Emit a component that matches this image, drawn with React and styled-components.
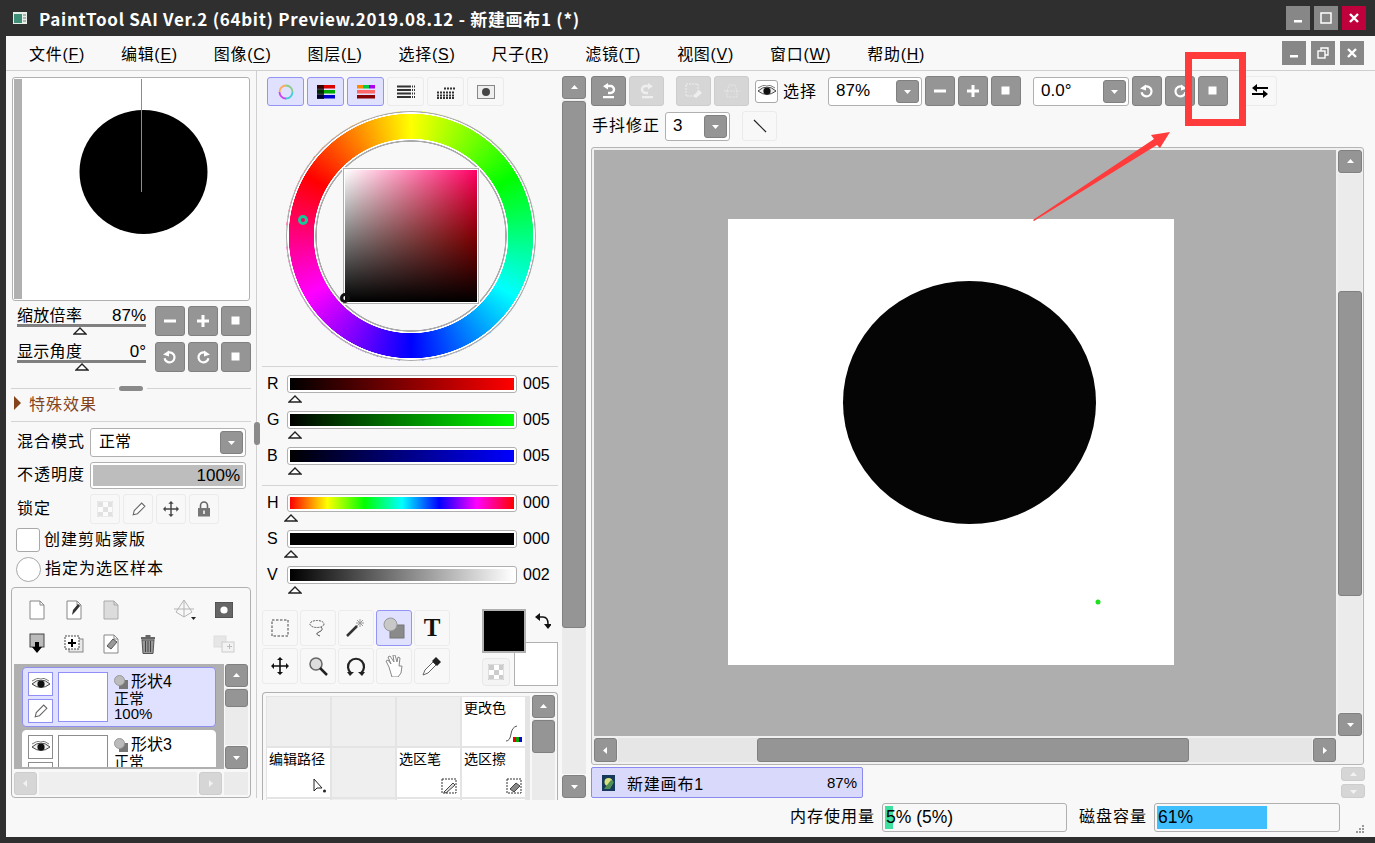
import styled, { createGlobalStyle, css } from 'styled-components';

const GlobalStyle = createGlobalStyle`
  html, body {
    margin: 0;
    padding: 0;
    background: #2f2f2f;
  }
  * {
    box-sizing: border-box;
  }
`;

const Window = styled.div`
  position: relative;
  width: 1375px;
  height: 843px;
  overflow: hidden;
  background: #2f2f2f;
  color: #000;
  font-family: 'Liberation Sans', 'Noto Sans CJK SC', sans-serif;
  font-size: 16px;
`;

const TitleBar = styled.div`
  height: 36px;
  display: flex;
  align-items: center;
  padding: 0 9px 0 13px;
`;

const AppTitle = styled.div`
  margin-left: 12px;
  flex: 1;
  color: #fff;
  font-family: 'Noto Sans CJK SC', 'Liberation Sans', sans-serif;
  font-size: 17px;
  font-weight: 700;
  letter-spacing: 0.7px;
  white-space: nowrap;
`;

const WinButtons = styled.div`
  display: flex;
  gap: ${(p) => p.$gap || 4}px;
`;

const WinButton = styled.div`
  width: 24px;
  height: 24px;
  display: flex;
  align-items: center;
  justify-content: center;
  background: ${(p) => p.$bg || '#878787'};
`;

const Body = styled.div`
  margin-left: 6px;
  height: 801px;
  background: #f8f8f8;
`;

const MenuBar = styled.div`
  height: 35px;
  display: flex;
  align-items: center;
  padding: 0 11px 0 23px;
  border-bottom: 1px solid #cfcfcf;
`;

const MenuItems = styled.div`
  flex: 1;
  display: flex;
  gap: 36px;
`;

const MenuItem = styled.span`
  white-space: nowrap;
  letter-spacing: 0.7px;
  u {
    text-underline-offset: 2px;
  }
`;

const Main = styled.div`
  display: flex;
  height: 766px;
`;

/* left panel */
const LeftPanel = styled.div`
  width: 251px;
  height: 727px;
  padding: 6px 0 0 5px;
  border-right: 1px solid #cfcfcf;
  position: relative;
`;

const Navigator = styled.div`
  width: 238px;
  height: 224px;
  margin-left: 1px;
  display: flex;
  align-items: stretch;
  background: #fff;
  border: 1px solid #b0b0b0;
  border-radius: 3px;
  padding: 1px;
`;

const NavStrip = styled.div`
  width: 8px;
  background: #b0b0b0;
`;

const SliderRow = styled.div`
  display: flex;
  margin-top: ${(p) => p.$top}px;
  padding-left: 6px;
  height: 30px;
`;

const SliderBlock = styled.div`
  position: relative;
  width: 129px;
  margin-right: 9px;
`;

const SliderText = styled.div`
  display: flex;
  justify-content: space-between;
  line-height: 20px;
  height: 17px;
  letter-spacing: 0.3px;
`;

const SliderValue = styled.span`
  font-size: 17px;
  letter-spacing: 0;
`;

const SliderTrack = styled.div`
  height: 3px;
  margin-top: 1px;
  background: #808080;
`;

const Triangle = styled.div`
  position: absolute;
  left: ${(p) => p.$left}px;
  top: ${(p) => p.$top}px;
  width: 14px;
  height: 8px;
  line-height: 0;
`;

const BtnGroup = styled.div`
  display: flex;
  gap: ${(p) => (p.$gap === undefined ? 3 : p.$gap)}px;
`;

const kinds = {
  solid: css`
    background: #959595;
    border: 1px solid #808080;
    color: #fff;
  `,
  muted: css`
    background: #d6d6d6;
    border: 1px solid #cdcdcd;
    color: #eee;
  `,
  ghost: css`
    background: #f8f8f8;
    border: 1px solid #ebebeb;
    color: #222;
  `,
  active: css`
    background: #e0e0ff;
    border: 1px solid #9494f5;
    color: #222;
  `,
  white: css`
    background: #fff;
    border: 1px solid #a8a8a8;
    color: #222;
  `,
};

const Btn = styled.button`
  width: ${(p) => p.$w || 30}px;
  height: ${(p) => p.$h || 30}px;
  flex: none;
  padding: 0;
  display: flex;
  align-items: center;
  justify-content: center;
  border-radius: 3px;
  margin-left: ${(p) => p.$ml || 0}px;
  ${(p) => kinds[p.$kind || 'solid']}
`;

const SashRow = styled.div`
  height: 10px;
  margin: 11px 5px 0 0;
  display: flex;
  align-items: center;
  gap: 4px;
`;

const SashLine = styled.div`
  flex: 1;
  height: 1px;
  background: #d4d4d4;
`;

const SashGrip = styled.div`
  width: 24px;
  height: 5px;
  border-radius: 3px;
  background: #8a8a8a;
`;

const EffectHead = styled.div`
  height: 29px;
  margin-right: 5px;
  padding: 0 0 8px 3px;
  display: flex;
  align-items: center;
  gap: 8px;
  color: #84431b;
  letter-spacing: 1px;
  border-bottom: 1px solid #d4d4d4;
`;

const Arrow = styled.div`
  width: 0;
  height: 0;
  border-style: solid;
  border-width: 7px 0 7px 7px;
  border-color: transparent transparent transparent #84431b;
`;

const FormRow = styled.div`
  display: flex;
  align-items: center;
  margin-top: ${(p) => p.$top}px;
  height: ${(p) => p.$h}px;
  padding-left: ${(p) => (p.$pad === undefined ? 6 : p.$pad)}px;
`;

const FormLabel = styled.div`
  width: 73px;
  flex: none;
  margin-bottom: 5px;
  letter-spacing: 1px;
  white-space: nowrap;
`;

const Select = styled.div`
  width: ${(p) => p.$w}px;
  height: ${(p) => p.$h || 30}px;
  margin-left: ${(p) => p.$ml || 0}px;
  flex: none;
  display: flex;
  align-items: center;
  justify-content: space-between;
  padding: 0 2px 0 7px;
  background: #fff;
  border: 1px solid #b0b0b0;
  border-radius: 3px;
  font-size: ${(p) => (p.$text ? 16 : 17)}px;
`;

const SelectValue = styled.span`
  margin-bottom: ${(p) => (p.$text ? 5 : 0)}px;
  margin-left: ${(p) => (p.$text ? 1 : 0)}px;
`;

const SelectCaret = styled.div`
  width: 23px;
  height: 23px;
  display: flex;
  align-items: center;
  justify-content: center;
  background: #959595;
  border: 1px solid #808080;
  border-radius: 3px;
`;

const OpacityBar = styled.div`
  width: 156px;
  height: 27px;
  padding: 2px;
  background: #fff;
  border: 1px solid #b0b0b0;
  border-radius: 3px;
`;

const OpacityFill = styled.div`
  height: 100%;
  padding-right: 3px;
  text-align: right;
  line-height: 21px;
  font-size: 17px;
  background: #bdbdbd;
`;

const Check = styled.div`
  width: ${(p) => p.$size}px;
  height: ${(p) => p.$size}px;
  flex: none;
  margin-right: ${(p) => p.$mr}px;
  background: #fff;
  border: 1px solid #a8a8a8;
  border-radius: ${(p) => (p.$round ? '50%' : '3px')};
`;

const CheckText = styled.span`
  margin-bottom: 5px;
  letter-spacing: 1px;
`;

const LayerPanel = styled.div`
  width: 240px;
  height: 211px;
  margin-top: 5px;
  padding: 5px 2px 0;
  background: #f8f8f8;
  border: 1px solid #b0b0b0;
  border-radius: 4px;
`;

const LayerTools = styled.div`
  display: grid;
  grid-template-columns: repeat(5, 37px) 41px;
  grid-auto-rows: 34px;
  padding-left: 4px;
  margin-bottom: 3px;
  place-items: center;
`;

const LayerBody = styled.div`
  display: flex;
  height: 105px;
`;

const LayerList = styled.div`
  width: 210px;
  padding: 3px 8px 2px;
  background: #b0b0b0;
`;

const LayerClip = styled.div`
  height: 100px;
  overflow: hidden;
  display: flex;
  flex-direction: column;
  gap: 3px;
`;

const LayerItem = styled.div`
  flex: none;
  height: 60px;
  display: flex;
  padding: 4px 5px;
  background: ${(p) => (p.$on ? '#e0e0ff' : '#fff')};
  border: 1px solid ${(p) => (p.$on ? '#8f8ff0' : '#fff')};
  border-radius: 4px;
  --edge: ${(p) => (p.$on ? '#8f8ff5' : '#8c8c8c')};
`;

const LayerFlags = styled.div`
  width: 25px;
  display: flex;
  flex-direction: column;
  gap: 3px;
`;

const LayerFlag = styled.div`
  width: 25px;
  height: 24px;
  flex: none;
  display: flex;
  align-items: center;
  justify-content: center;
  background: #fff;
  border: 1px solid var(--edge);
`;

const LayerThumb = styled.div`
  width: 50px;
  height: 50px;
  margin-left: 5px;
  flex: none;
  background: #fff;
  border: 1px solid var(--edge);
`;

const LayerText = styled.div`
  margin-left: 6px;
  font-size: 15px;
  line-height: 15px;
`;

const LayerName = styled.div`
  display: flex;
  align-items: center;
  gap: 3px;
  height: 19px;
  font-size: 16px;
`;

const HBar = styled.div`
  display: flex;
  height: 23px;
  margin-top: 3px;
  gap: 2px;
`;

const HTrack = styled.div`
  flex: 1;
  padding-left: ${(p) => p.$start || 0}px;
  background: ${(p) => p.$bg || '#efefef'};
`;

const HThumb = styled.div`
  width: ${(p) => p.$w}px;
  height: 100%;
  background: #959595;
  border: 1px solid #808080;
  border-radius: 3px;
`;

const ScrollCorner = styled.div`
  width: 24px;
  background: #ebebeb;
`;

const VBar = styled.div`
  width: ${(p) => p.$w || 23}px;
  height: ${(p) => p.$h}px;
  margin-left: ${(p) => p.$ml || 0}px;
  margin-top: ${(p) => p.$mt || 0}px;
  flex: none;
  display: flex;
  flex-direction: column;
  gap: 1px;
`;

const VTrack = styled.div`
  flex: 1;
  min-height: 0;
  padding-top: ${(p) => p.$start || 0}px;
  background: #ebebeb;
`;

const VThumb = styled.div`
  height: ${(p) => p.$h}px;
  background: #959595;
  border: 1px solid #808080;
  border-radius: 3px;
`;

const Splitter = styled.div`
  position: absolute;
  right: -4px;
  top: 351px;
  width: 6px;
  height: 23px;
  background: #8a8a8a;
  border-radius: 3px;
`;

/* colour panel */
const ColorPanel = styled.div`
  width: 305px;
  flex: none;
  height: 727px;
  padding: 6px 0 0 5px;
`;

const ColorTabs = styled.div`
  display: flex;
  gap: 3px;
  padding-left: 5px;
`;

const WheelBox = styled.div`
  width: 250px;
  height: 250px;
  margin: 5px 0 0 24px;
  position: relative;
  border-radius: 50%;
  background:
    radial-gradient(circle, #f8f8f8 0 94px, #aaa 94.5px 95.5px, #fff 96px 97px, transparent 97.5px 122px, #fff 122.5px 123.5px, #aaa 124px 125px, transparent 125px),
    conic-gradient(#ffff00, #00ff00 60deg, #00ffff 120deg, #0000ff 180deg, #ff00ff 240deg, #ff0000 300deg, #ffff00);
`;

const SvSquare = styled.div`
  position: absolute;
  left: 57px;
  top: 57px;
  width: 136px;
  height: 136px;
  border: 1px solid #b0b0b0;
  outline: 1px solid #f8f8f8;
  padding: 1px;
  background: #fff;
`;

const SvFill = styled.div`
  width: 100%;
  height: 100%;
  background:
    linear-gradient(to top, #000, transparent),
    linear-gradient(to right, #fff, transparent),
    linear-gradient(to bottom, #ff0068, #ff0000 55%, #ff0000);
`;

const WheelMark = styled.div`
  position: absolute;
  left: ${(p) => p.$x}px;
  top: ${(p) => p.$y}px;
  width: ${(p) => p.$d}px;
  height: ${(p) => p.$d}px;
  border-radius: 50%;
  border: 3px solid ${(p) => p.$c};
`;

const Rule = styled.div`
  width: 296px;
  height: 1px;
  background: #d4d4d4;
  margin-top: ${(p) => p.$top}px;
`;

const ChannelGroup = styled.div`
  padding: 8px 0 0 5px;
  display: flex;
  flex-direction: column;
  gap: 18px;
`;

const Channel = styled.div`
  position: relative;
  display: flex;
  align-items: center;
  height: 18px;
`;

const ChannelName = styled.div`
  width: 20px;
`;

const ChannelBar = styled.div`
  width: 230px;
  height: 18px;
  padding: 2px;
  background: #fff;
  border: 1px solid #b0b0b0;
  border-radius: 3px;
`;

const ChannelFill = styled.div`
  height: 100%;
  background: ${(p) => p.$bg};
`;

const ChannelValue = styled.div`
  margin-left: 6px;
`;

const ToolRow = styled.div`
  display: flex;
  margin-top: 26px;
  height: 76px;
`;

const ToolGrid = styled.div`
  width: 188px;
  display: grid;
  grid-template-columns: repeat(5, 36px);
  grid-auto-rows: 36px;
  gap: 2px;
`;

const ToolText = styled.span`
  font-family: 'Liberation Serif', serif;
  font-size: 25px;
  font-weight: 700;
  color: #111;
`;

const Swatches = styled.div`
  position: relative;
  width: 76px;
  margin-left: 32px;
`;

const BackSwatch = styled.div`
  position: absolute;
  right: 0;
  bottom: 0;
  width: 44px;
  height: 44px;
  background: #fff;
  border: 1px solid #b0b0b0;
`;

const FrontSwatch = styled.div`
  position: absolute;
  left: 0;
  top: -1px;
  width: 44px;
  height: 44px;
  background: #000;
  border: 2px solid #b0b0b0;
`;

const SwapMark = styled.div`
  position: absolute;
  right: 7px;
  top: 3px;
  line-height: 0;
`;

const ClearSwatch = styled.div`
  position: absolute;
  left: 0;
  bottom: 0;
  width: 28px;
  height: 28px;
  display: flex;
  align-items: center;
  justify-content: center;
  background: #f4f4f4;
  border: 1px solid #e8e8e8;
  border-radius: 4px;
`;

const BrushBox = styled.div`
  width: 296px;
  height: 108px;
  margin-top: 6px;
  padding: 3px 2px 0 3px;
  display: flex;
  overflow: hidden;
  border: 1px solid #b0b0b0;
  border-bottom: none;
  border-radius: 4px 4px 0 0;
`;

const BrushGrid = styled.div`
  width: 264px;
  flex: none;
  padding: 1px 5px 0 1px;
  display: grid;
  grid-template-columns: repeat(4, 63px);
  grid-auto-rows: 49px;
  gap: 2px;
  background: #e4e4e4;
`;

const BrushCell = styled.div`
  display: flex;
  flex-direction: column;
  justify-content: space-between;
  padding: 0 3px 3px 2px;
  font-size: 14px;
  white-space: nowrap;
  background: ${(p) => (p.$on ? '#fff' : '#efefef')};
`;

const BrushIcon = styled.div`
  align-self: flex-end;
  line-height: 0;
`;

/* right side */
const RightColumn = styled.div`
  flex: 1;
  padding: 5px 0 0 5px;
`;

const ToolbarRow = styled.div`
  display: flex;
  align-items: center;
  height: 30px;
  margin-top: ${(p) => p.$top || 0}px;
`;

const BarLabel = styled.span`
  margin-left: ${(p) => p.$ml || 0}px;
  margin-bottom: ${(p) => p.$up || 0}px;
  letter-spacing: 1px;
  white-space: nowrap;
`;

const CanvasBox = styled.div`
  width: 773px;
  height: 618px;
  margin-top: 6px;
  padding: 2px;
  display: grid;
  grid-template-columns: 742px 24px;
  grid-template-rows: 586px 24px;
  column-gap: 2px;
  row-gap: 2px;
  border: 1px solid #b5b5b5;
  border-radius: 3px;
  background: #f0f0f0;
`;

const Stage = styled.div`
  background: #aeaeae;
  padding: 69px 0 0 134px;
`;

const Sheet = styled.svg`
  display: block;
  background: #fff;
`;

const CanvasHBar = styled.div`
  display: flex;
  gap: 1px;
`;

const DocRow = styled.div`
  display: flex;
  height: 31px;
  margin-top: 2px;
  padding-right: 10px;
  justify-content: space-between;
`;

const DocTab = styled.div`
  width: 272px;
  height: 31px;
  display: flex;
  align-items: center;
  padding: 0 5px 0 10px;
  background: #d9d9fb;
  border: 1px solid #8a8af0;
  border-radius: 2px;
  font-size: 15px;
`;

const DocName = styled.span`
  margin-left: 12px;
  flex: 1;
  font-size: 16px;
  letter-spacing: 0.8px;
`;

const DocNudge = styled.div`
  display: flex;
  flex-direction: column;
  gap: 3px;
`;

const StatusRow = styled.div`
  display: flex;
  justify-content: flex-end;
  align-items: center;
  height: 29px;
  margin-top: 5px;
  padding-right: 35px;
`;

const Meter = styled.div`
  width: ${(p) => p.$w}px;
  height: 29px;
  margin: 0 ${(p) => p.$mr || 0}px 0 7px;
  padding-left: 3px;
  font-size: 17.5px;
  line-height: 27px;
  white-space: nowrap;
  border: 1px solid #b0b0b0;
  border-radius: 3px;
  background: linear-gradient(${(p) => p.$fill}, ${(p) => p.$fill}) no-repeat 2px 2px / ${(p) => p.$used}px 23px #f8f8f8;
`;

const Grip = styled.svg`
  position: absolute;
  left: 1354px;
  top: 824px;
`;

const Annotation = styled.svg`
  position: absolute;
  left: 0;
  top: 0;
  pointer-events: none;
`;

/* drawings */
const Glyph = ({ size = 16, box = 16, children }) => (
  <svg width={size} height={size} viewBox={`0 0 ${box} ${box}`} fill="none">
    {children}
  </svg>
);

const Minus = () => (
  <Glyph><rect x="2" y="6.5" width="12" height="3" fill="#fff" /></Glyph>
);
const Plus = () => (
  <Glyph><path d="M6.5 2h3v4.5H14v3H9.5V14h-3V9.5H2v-3h4.5z" fill="#fff" /></Glyph>
);
const Stop = () => (
  <Glyph><rect x="3.5" y="3.5" width="8" height="8" fill="#fff" /></Glyph>
);
const RotL = () => (
  <Glyph>
    <path d="M6 3.600a5 5 0 1 1-3.400 5.600" stroke="#fff" strokeWidth="2.200" />
    <path d="M1 5.500 7 1.500v6z" fill="#fff" />
  </Glyph>
);
const RotR = () => (
  <Glyph>
    <path d="M10 3.600a5 5 0 1 0 3.400 5.600" stroke="#fff" strokeWidth="2.200" />
    <path d="M15 5.500 9 1.500v6z" fill="#fff" />
  </Glyph>
);
const Undo = ({ c = '#fff' }) => (
  <Glyph>
    <path d="M6 3h3.500a3.500 3.500 0 0 1 0 7H7" stroke={c} strokeWidth="2.400" />
    <path d="M7 0v6.500L2 3.200zM2 13h11v2.200H2z" fill={c} />
  </Glyph>
);
const Redo = ({ c = '#eee' }) => (
  <Glyph>
    <path d="M10 3H6.500a3.500 3.500 0 0 0 0 7H9" stroke={c} strokeWidth="2.400" />
    <path d="M9 0v6.500l5-3.300zM3 13h11v2.200H3z" fill={c} />
  </Glyph>
);
const Caret = ({ dir = 'down', c = '#fff', size = 9 }) => {
  const shapes = {
    down: '1,3 8,3 4.5,7',
    up: '1,6 8,6 4.5,2',
    left: '6,1 6,8 2,4.5',
    right: '3,1 3,8 7,4.5',
  };
  return <Glyph size={size} box={9}><polygon points={shapes[dir]} fill={c} /></Glyph>;
};
const Thumb = ({ c = '#222' }) => (
  <svg width="14" height="8" viewBox="0 0 14 8">
    <polygon points="7,1 13,7 1,7" fill="#fff" stroke={c} strokeWidth="1.400" />
  </svg>
);
const Eye = () => (
  <svg width="20" height="12" viewBox="0 0 20 12">
    <path d="M1 6q9-8 18 0q-9 7-18 0z" fill="#eee" stroke="#444" />
    <circle cx="10" cy="6" r="3.600" fill="#111" />
    <path d="M1 3q9-6 17 0" stroke="#777" fill="none" />
  </svg>
);
const PencilMark = ({ c = '#666' }) => (
  <Glyph size={17} box={16}>
    <path d="M3 13l1-4 7-7 3 3-7 7z M3 13l4-1" stroke={c} fill="#fff" />
  </Glyph>
);
const ShapeMark = () => (
  <svg width="14" height="14" viewBox="0 0 14 14">
    <rect x="5" y="5" width="9" height="9" fill="#777" />
    <circle cx="5.500" cy="5.500" r="5" fill="#bbb" stroke="#999" />
  </svg>
);
const Page = ({ fill = '#fff', edge = '#888', children }) => (
  <svg width="20" height="20" viewBox="0 0 20 20">
    <path d="M3 1h10l4 4v14H3z" fill={fill} stroke={edge} />
    <path d="M13 1v4h4" fill="none" stroke={edge} />
    {children}
  </svg>
);
const MoveMark = ({ c = '#222', size = 18 }) => (
  <Glyph size={size} box={18}>
    <path d="M9 2v14M2 9h14" stroke={c} strokeWidth="1.600" />
    <path d="M9 0l3 3H6zM9 18l-3-3h6zM0 9l3-3v6zM18 9l-3 3V6z" fill={c} />
  </Glyph>
);
const Checker = ({ op = 1 }) => (
  <svg width="16" height="16" viewBox="0 0 16 16" opacity={op}>
    <rect width="16" height="16" fill="#fff" stroke="#bbb" />
    <path d="M1 1h5v5H1zM6 6h5v5H6zM11 1h4v5h-4zM1 11h5v4H1zM11 11h4v4h-4z" fill="#ccc" />
  </svg>
);
const LockMark = () => (
  <svg width="14" height="16" viewBox="0 0 14 16">
    <path d="M3.500 8V4.500a3.500 3.500 0 0 1 7 0V8" stroke="#666" strokeWidth="1.600" fill="none" />
    <rect x="1" y="7" width="12" height="8.500" fill="#777" />
    <rect x="6" y="9.500" width="2" height="3.500" fill="#ddd" />
  </svg>
);

const layerTools = [
  <Page key="a" />,
  <Page key="b"><path d="M8 15l1-5 5-6 2 2-5 6z" fill="#333" /></Page>,
  <Page key="c" fill="#dcdcdc" edge="#aaa" />,
  <span key="gap1" />,
  <svg key="d" width="24" height="22" viewBox="0 0 24 22">
    <path d="M11 1 3 13l8 5 8-5zM11 1v17M1 10h20" stroke="#b5b5b5" fill="none" />
    <polygon points="18,18 23,18 20.500,21" fill="#222" />
  </svg>,
  <svg key="e" width="18" height="16" viewBox="0 0 18 16">
    <rect width="18" height="16" fill="#666" stroke="#444" />
    <circle cx="9" cy="8" r="3.600" fill="#fff" />
  </svg>,
  <svg key="f" width="20" height="22" viewBox="0 0 20 22">
    <rect x="3" y="1" width="14" height="13" fill="#bbb" stroke="#444" />
    <path d="M8 9h4v5h3l-5 6-5-6h3z" fill="#000" />
  </svg>,
  <svg key="g" width="20" height="18" viewBox="0 0 20 18">
    <rect x="5" y="4" width="14" height="13" fill="#e8e8e8" stroke="#888" />
    <rect x="1" y="1" width="14" height="13" fill="#fff" stroke="#444" strokeDasharray="2 1" />
    <path d="M7 4h2v3h3v2H9v3H7V9H4V7h3z" fill="#000" />
  </svg>,
  <Page key="h"><path d="M6 12l6-7 4 3-6 7z" fill="#999" stroke="#555" /></Page>,
  <svg key="i" width="16" height="19" viewBox="0 0 16 19">
    <rect x="1" y="2" width="14" height="2.500" fill="#666" />
    <rect x="5.500" y="0" width="5" height="2" fill="#666" />
    <path d="M2 5h12l-1 13.500H3z" fill="#999" stroke="#555" />
    <path d="M5.500 6v11M8 6v11M10.500 6v11" stroke="#444" />
  </svg>,
  <span key="gap2" />,
  <svg key="j" width="22" height="18" viewBox="0 0 22 18">
    <rect x="1" y="1" width="12" height="11" fill="#e6e6e6" stroke="#ddd" />
    <rect x="9" y="7" width="12" height="10" fill="#f2f2f2" stroke="#ccc" />
    <path d="M14 11h2v-2h1v2h2v1h-2v2h-1v-2h-2z" fill="#bbb" />
  </svg>,
];

const tools = [
  { key: 'select', icon: <svg width="18" height="18" viewBox="0 0 18 18"><rect x="1" y="1" width="16" height="16" fill="none" stroke="#444" strokeDasharray="2.500 1.500" /></svg> },
  { key: 'lasso', icon: <svg width="20" height="20" viewBox="0 0 20 20"><ellipse cx="9" cy="6" rx="7" ry="3.500" fill="none" stroke="#555" strokeDasharray="2 1" /><path d="M13 9q3 3-2 5t1 4" fill="none" stroke="#555" /></svg> },
  { key: 'wand', icon: <svg width="20" height="20" viewBox="0 0 20 20"><path d="M1 18 11 8" stroke="#333" strokeWidth="2.500" /><path d="M14 1v8M10 5h8M11 2l6 6M17 2l-6 6" stroke="#999" /></svg> },
  { key: 'shape', active: true, icon: <svg width="22" height="22" viewBox="0 0 22 22"><rect x="7" y="8" width="14" height="13" fill="#8a8a8a" stroke="#777" /><circle cx="7.500" cy="7.500" r="6.500" fill="#c8c8c8" stroke="#999" /></svg> },
  { key: 'text', icon: <ToolText>T</ToolText> },
  { key: 'move', icon: <MoveMark c="#111" /> },
  { key: 'zoom', icon: <svg width="20" height="20" viewBox="0 0 20 20"><circle cx="8" cy="8" r="6" fill="#ddd" stroke="#666" strokeWidth="1.500" /><path d="M12 12l7 7" stroke="#222" strokeWidth="2.500" /></svg> },
  { key: 'rotate', icon: <svg width="20" height="20" viewBox="0 0 20 20"><path d="M5 17a8 8 0 1 1 10 0" fill="none" stroke="#222" strokeWidth="2.200" /><path d="M1 16h7l-4 4zM19 16h-7l4 4z" fill="#222" /></svg> },
  { key: 'hand', icon: <svg width="20" height="22" viewBox="0 0 20 22"><path d="M5 12 2 6l2-1 3 4-3-7 2-1 4 6-1-7 2 0 2 7 1-5 2 1-1 8 3 0-1 7-3 4H8z" fill="#fff" stroke="#888" /></svg> },
  { key: 'picker', icon: <svg width="20" height="20" viewBox="0 0 20 20"><path d="M1 19l2-5 8-8 3 3-8 8z" fill="#fff" stroke="#666" /><path d="M10 5l4-4 5 5-4 4z" fill="#222" /></svg> },
];

const rows = [
  { key: 'R', bg: 'linear-gradient(to right,#000,#f00)', value: '005', pos: 1 },
  { key: 'G', bg: 'linear-gradient(to right,#000,#0f0)', value: '005', pos: 1 },
  { key: 'B', bg: 'linear-gradient(to right,#000,#00f)', value: '005', pos: 1 },
];

const hsv = [
  { key: 'H', bg: 'linear-gradient(to right,#f00,#ff0 16.6%,#0f0 33.3%,#0ff 50%,#00f 66.6%,#f0f 83.3%,#f00)', value: '000', pos: -3 },
  { key: 'S', bg: '#000', value: '000', pos: -3 },
  { key: 'V', bg: 'linear-gradient(to right,#000,#fff)', value: '002', pos: 1 },
];

const brushes = [
  {}, {}, {},
  { name: '更改色', icon: <svg width="16" height="18" viewBox="0 0 16 18"><path d="M0 16q4 0 5-7t6-8" fill="none" stroke="#555" /><rect x="7" y="12" width="3" height="5" fill="#e00" /><rect x="10" y="12" width="3" height="5" fill="#0a0" /><rect x="13" y="12" width="3" height="5" fill="#00d" /></svg> },
  { name: '编辑路径', icon: <svg width="14" height="16" viewBox="0 0 14 16"><path d="M1 1v12l3-3h5z" fill="#fff" stroke="#222" /><circle cx="11.500" cy="13" r="1.500" fill="#222" /></svg> },
  {},
  { name: '选区笔', icon: <svg width="16" height="16" viewBox="0 0 16 16"><rect x="1" y="1" width="14" height="14" fill="none" stroke="#333" strokeDasharray="2 1" /><path d="M3 14l9-9 2 2-9 8z" fill="#ddd" stroke="#444" /></svg> },
  { name: '选区擦', icon: <svg width="16" height="16" viewBox="0 0 16 16"><rect x="1" y="1" width="14" height="14" fill="none" stroke="#333" strokeDasharray="2 1" /><path d="M4 11l6-6 4 3-6 6z" fill="#888" stroke="#444" /></svg> },
  { name: ' ' }, {}, { name: ' ' }, { name: ' ' },
];

const menus = [
  ['文件', 'F'], ['编辑', 'E'], ['图像', 'C'], ['图层', 'L'], ['选择', 'S'],
  ['尺子', 'R'], ['滤镜', 'T'], ['视图', 'V'], ['窗口', 'W'], ['帮助', 'H'],
];

const ArrowBtn = ({ dir, w = 23, h = 23, kind = 'solid' }) => (
  <Btn $w={w} $h={h} $kind={kind}>
    <Caret dir={dir} c={kind === 'muted' ? '#f2f2f2' : '#fff'} />
  </Btn>
);

const ChannelRow = ({ item }) => (
  <Channel>
    <ChannelName>{item.key}</ChannelName>
    <ChannelBar><ChannelFill $bg={item.bg} /></ChannelBar>
    <ChannelValue>{item.value}</ChannelValue>
    <Triangle $left={20 + item.pos} $top={20}><Thumb /></Triangle>
  </Channel>
);

const LayerRow = ({ name, on, pencil }) => (
  <LayerItem $on={on}>
    <LayerFlags>
      <LayerFlag><Eye /></LayerFlag>
      <LayerFlag>{pencil && <PencilMark />}</LayerFlag>
    </LayerFlags>
    <LayerThumb />
    <LayerText>
      <LayerName><ShapeMark />{name}</LayerName>
      <div>正常</div>
      <div>100%</div>
    </LayerText>
  </LayerItem>
);

const App = () => {
  return (
    <Window>
      <GlobalStyle />
      <TitleBar>
        <svg width="14" height="12" viewBox="0 0 14 12">
          <rect width="14" height="12" fill="#e8efe8" />
          <rect x="1" y="2" width="8" height="9" fill="#3f8f78" />
          <path d="M10 3h3M10 6h3M10 9h3" stroke="#777" />
        </svg>
        <AppTitle>PaintTool SAI Ver.2 (64bit) Preview.2019.08.12 - 新建画布1 (*)</AppTitle>
        <WinButtons>
          <WinButton>
            <svg width="10" height="10" viewBox="0 0 10 10"><rect x="1" y="7" width="8" height="2.500" fill="#fff" /></svg>
          </WinButton>
          <WinButton>
            <svg width="12" height="12" viewBox="0 0 12 12"><rect x="1" y="1" width="10" height="10" fill="none" stroke="#fff" strokeWidth="1.500" /></svg>
          </WinButton>
          <WinButton $bg="#c0003c">
            <svg width="12" height="12" viewBox="0 0 12 12"><path d="M2 2l8 8M10 2l-8 8" stroke="#fff" strokeWidth="2.400" /></svg>
          </WinButton>
        </WinButtons>
      </TitleBar>

      <Body>
        <MenuBar>
          <MenuItems>
            {menus.map(([name, key]) => (
              <MenuItem key={key}>{name}(<u>{key}</u>)</MenuItem>
            ))}
          </MenuItems>
          <WinButtons $gap={5}>
            <WinButton>
              <svg width="10" height="10" viewBox="0 0 10 10"><rect x="1" y="7" width="8" height="2.500" fill="#fff" /></svg>
            </WinButton>
            <WinButton>
              <svg width="12" height="12" viewBox="0 0 12 12"><rect x="1" y="4" width="7" height="7" fill="none" stroke="#fff" strokeWidth="1.400" /><path d="M4 4V1h7v7H8" fill="none" stroke="#fff" strokeWidth="1.400" /></svg>
            </WinButton>
            <WinButton>
              <svg width="12" height="12" viewBox="0 0 12 12"><path d="M2 2l8 8M10 2l-8 8" stroke="#fff" strokeWidth="2.400" /></svg>
            </WinButton>
          </WinButtons>
        </MenuBar>

        <Main>
          <LeftPanel>
            <Navigator>
              <NavStrip />
              <svg width="226" height="220" viewBox="0 0 226 220">
                <ellipse cx="121.500" cy="93" rx="64" ry="62" fill="#000" />
                <path d="M119.500 0v113" stroke="#8c8c8c" />
              </svg>
            </Navigator>

            <SliderRow $top={5}>
              <SliderBlock>
                <SliderText><span>缩放倍率</span><SliderValue>87%</SliderValue></SliderText>
                <SliderTrack />
                <Triangle $left={56} $top={21}><Thumb /></Triangle>
              </SliderBlock>
              <BtnGroup>
                <Btn><Minus /></Btn>
                <Btn><Plus /></Btn>
                <Btn><Stop /></Btn>
              </BtnGroup>
            </SliderRow>
            <SliderRow $top={6}>
              <SliderBlock>
                <SliderText><span>显示角度</span><SliderValue>0°</SliderValue></SliderText>
                <SliderTrack />
                <Triangle $left={58} $top={21}><Thumb /></Triangle>
              </SliderBlock>
              <BtnGroup>
                <Btn><RotL /></Btn>
                <Btn><RotR /></Btn>
                <Btn><Stop /></Btn>
              </BtnGroup>
            </SliderRow>

            <SashRow><SashLine /><SashGrip /><SashLine /></SashRow>
            <EffectHead><Arrow />特殊效果</EffectHead>

            <FormRow $top={6} $h={29}>
              <FormLabel>混合模式</FormLabel>
              <Select $w={156} $h={29} $text>
                <SelectValue $text>正常</SelectValue>
                <SelectCaret><Caret /></SelectCaret>
              </Select>
            </FormRow>
            <FormRow $top={5} $h={27}>
              <FormLabel>不透明度</FormLabel>
              <OpacityBar><OpacityFill>100%</OpacityFill></OpacityBar>
            </FormRow>
            <FormRow $top={5} $h={30}>
              <FormLabel>锁定</FormLabel>
              <BtnGroup>
                <Btn $kind="ghost"><Checker op={0.5} /></Btn>
                <Btn $kind="ghost"><PencilMark /></Btn>
                <Btn $kind="ghost"><MoveMark c="#444" size={16} /></Btn>
                <Btn $kind="ghost"><LockMark /></Btn>
              </BtnGroup>
            </FormRow>
            <FormRow $top={4} $h={24} $pad={5}>
              <Check $size={24} $mr={4} />
              <CheckText>创建剪贴蒙版</CheckText>
            </FormRow>
            <FormRow $top={4} $h={26} $pad={5}>
              <Check $size={25} $mr={4} $round />
              <CheckText>指定为选区样本</CheckText>
            </FormRow>

            <LayerPanel>
              <LayerTools>{layerTools}</LayerTools>
              <LayerBody>
                <LayerList>
                  <LayerClip>
                    <LayerRow name="形状4" on pencil />
                    <LayerRow name="形状3" />
                  </LayerClip>
                </LayerList>
                <VBar $h={105} $ml={1}>
                  <ArrowBtn dir="up" />
                  <VTrack $start={1}><VThumb $h={18} /></VTrack>
                  <ArrowBtn dir="down" />
                </VBar>
              </LayerBody>
              <HBar>
                <ArrowBtn dir="left" kind="muted" />
                <HTrack />
                <ArrowBtn dir="right" kind="muted" />
                <ScrollCorner />
              </HBar>
            </LayerPanel>
            <Splitter />
          </LeftPanel>

          <ColorPanel>
            <ColorTabs>
              <Btn $w={37} $h={29} $kind="active">
                <svg width="16" height="16" viewBox="0 0 16 16" fill="none" strokeWidth="1.800">
                  <path d="M8 1.500a6.500 6.500 0 0 1 6.500 6.500" stroke="#8c8" />
                  <path d="M14.500 8A6.500 6.500 0 0 1 8 14.500" stroke="#4cd" />
                  <path d="M8 14.500A6.500 6.500 0 0 1 1.500 8" stroke="#c4e" />
                  <path d="M1.500 8A6.500 6.500 0 0 1 8 1.500" stroke="#fa5" />
                </svg>
              </Btn>
              <Btn $w={37} $h={29} $kind="active">
                <svg width="18" height="14" viewBox="0 0 18 14"><rect width="18" height="3.500" fill="#d00" /><rect y="5" width="18" height="3.500" fill="#0a0" /><rect y="10" width="18" height="3.500" fill="#00c" /><rect width="7" height="14" fill="#000" opacity=".75" /></svg>
              </Btn>
              <Btn $w={37} $h={29} $kind="active">
                <svg width="18" height="14" viewBox="0 0 18 14"><rect width="6" height="3.500" fill="#f80" /><rect x="6" width="6" height="3.500" fill="#0c4" /><rect x="12" width="6" height="3.500" fill="#a0e" /><rect y="5" width="18" height="3.500" fill="#f66" /><rect y="10" width="18" height="3.500" fill="#800" /></svg>
              </Btn>
              <Btn $w={37} $h={29} $kind="ghost">
                <svg width="18" height="14" viewBox="0 0 18 14"><path d="M0 1.500h18M0 5h18M0 8.500h18M0 12h18" stroke="#333" strokeWidth="1.800" strokeDasharray="14 1 1 1" /></svg>
              </Btn>
              <Btn $w={37} $h={29} $kind="ghost">
                <svg width="18" height="14" viewBox="0 0 18 14"><path d="M0 7.500h18M0 10.500h18M0 13h18M7 3.500h11" stroke="#333" strokeWidth="1.800" strokeDasharray="2 1" /></svg>
              </Btn>
              <Btn $w={37} $h={29} $kind="ghost">
                <svg width="18" height="14" viewBox="0 0 18 14"><rect x=".5" y=".5" width="17" height="13" fill="#eee" stroke="#888" /><circle cx="9" cy="7" r="4" fill="#444" /></svg>
              </Btn>
            </ColorTabs>

            <WheelBox>
              <SvSquare><SvFill /></SvSquare>
              <WheelMark $x={12} $y={104} $d={10} $c="#17c79a" />
              <WheelMark $x={54} $y={182} $d={10} $c="#111" />
            </WheelBox>

            <Rule $top={5} />
            <ChannelGroup>
              {rows.map((item) => <ChannelRow key={item.key} item={item} />)}
            </ChannelGroup>
            <Rule $top={20} />
            <ChannelGroup>
              {hsv.map((item) => <ChannelRow key={item.key} item={item} />)}
            </ChannelGroup>

            <ToolRow>
              <ToolGrid>
                {tools.map((t) => (
                  <Btn key={t.key} $w={36} $h={36} $kind={t.active ? 'active' : 'ghost'}>{t.icon}</Btn>
                ))}
              </ToolGrid>
              <Swatches>
                <BackSwatch />
                <FrontSwatch />
                <SwapMark>
                  <svg width="16" height="16" viewBox="0 0 16 16"><path d="M4 4h4q5 0 5 7" fill="none" stroke="#111" strokeWidth="1.500" /><path d="M5 0v8L0 4zM9 11h8l-4 5z" fill="#111" /></svg>
                </SwapMark>
                <ClearSwatch><Checker /></ClearSwatch>
              </Swatches>
            </ToolRow>

            <BrushBox>
              <BrushGrid>
                {brushes.map((b, i) => (
                  <BrushCell key={i} $on={!!b.name}>
                    <span>{b.name}</span>
                    {b.icon && <BrushIcon>{b.icon}</BrushIcon>}
                  </BrushCell>
                ))}
              </BrushGrid>
              <VBar $h={130} $ml={2} $mt={-1} $w={23}>
                <ArrowBtn dir="up" />
                <VTrack $start={1}><VThumb $h={33} /></VTrack>
              </VBar>
            </BrushBox>
          </ColorPanel>

          <VBar $w={24} $h={722} $mt={5}>
            <ArrowBtn dir="up" w={24} />
            <VTrack $start={1}><VThumb $h={527} /></VTrack>
            <ArrowBtn dir="down" w={24} />
          </VBar>

          <RightColumn>
            <ToolbarRow>
              <Btn $w={35}><Undo /></Btn>
              <Btn $w={35} $ml={3} $kind="muted"><Redo /></Btn>
              <Btn $w={35} $ml={12} $kind="muted">
                <svg width="18" height="16" viewBox="0 0 18 16"><rect x="1" y="1" width="12" height="12" fill="none" stroke="#eee" strokeDasharray="2 1" /><path d="M8 13l6-6 3 3-6 5z" fill="#eee" /></svg>
              </Btn>
              <Btn $w={35} $ml={3} $kind="muted">
                <svg width="18" height="14" viewBox="0 0 18 14"><path d="M1 7h16M4 7l2-6h6l2 6v6H4z" fill="none" stroke="#e6e6e6" strokeDasharray="2 1" /></svg>
              </Btn>
              <Btn $w={23} $h={23} $ml={6} $kind="white"><Eye /></Btn>
              <BarLabel $ml={5} $up={3}>选择</BarLabel>
              <Select $w={94} $ml={11} $h={29}>
                87%
                <SelectCaret><Caret /></SelectCaret>
              </Select>
              <Btn $ml={3}><Minus /></Btn>
              <Btn $ml={3}><Plus /></Btn>
              <Btn $ml={3}><Stop /></Btn>
              <Select $w={96} $ml={12} $h={29}>
                0.0°
                <SelectCaret><Caret /></SelectCaret>
              </Select>
              <Btn $ml={3}><RotL /></Btn>
              <Btn $ml={3}><RotR /></Btn>
              <Btn $ml={3}><Stop /></Btn>
              <Btn $w={34} $ml={15} $kind="ghost">
                <svg width="16" height="14" viewBox="0 0 16 14"><path d="M3 4h13M0 10h13" stroke="#000" strokeWidth="2" /><path d="M5 0v8L0 4zM11 6v8l5-4z" fill="#000" /></svg>
              </Btn>
            </ToolbarRow>
            <ToolbarRow $top={5}>
              <BarLabel $ml={1} $up={4}>手抖修正</BarLabel>
              <Select $w={65} $ml={5} $h={29}>
                3
                <SelectCaret><Caret /></SelectCaret>
              </Select>
              <Btn $w={35} $ml={12} $kind="ghost">
                <svg width="16" height="16" viewBox="0 0 16 16"><path d="M2 2l12 12" stroke="#222" strokeWidth="1.200" /></svg>
              </Btn>
            </ToolbarRow>

            <CanvasBox>
              <Stage>
                <Sheet width="446" height="446" viewBox="0 0 446 446">
                  <ellipse cx="241.500" cy="183.500" rx="126.500" ry="121.500" fill="#050505" />
                  <circle cx="370" cy="383" r="2.500" fill="#1fe01f" />
                </Sheet>
              </Stage>
              <VBar $w={24} $h={586}>
                <ArrowBtn dir="up" w={24} />
                <VTrack $start={117}><VThumb $h={305} /></VTrack>
                <ArrowBtn dir="down" w={24} />
              </VBar>
              <CanvasHBar>
                <ArrowBtn dir="left" w={23} h={24} />
                <HTrack $start={139} $bg="#e6e6e6"><HThumb $w={432} /></HTrack>
                <ArrowBtn dir="right" w={23} h={24} />
              </CanvasHBar>
            </CanvasBox>

            <DocRow>
              <DocTab>
                <svg width="13" height="16" viewBox="0 0 13 16">
                  <rect width="13" height="16" fill="#153a5c" />
                  <circle cx="6.500" cy="7" r="4" fill="#d7e27a" />
                  <path d="M2 14 9 5l3 2-4 7z" fill="#4f8f55" />
                </svg>
                <DocName>新建画布1</DocName>
                87%
              </DocTab>
              <DocNudge>
                <ArrowBtn dir="up" w={24} h={14} kind="muted" />
                <ArrowBtn dir="down" w={24} h={14} kind="muted" />
              </DocNudge>
            </DocRow>

            <StatusRow>
              <BarLabel $up={5}>内存使用量</BarLabel>
              <Meter $w={185} $mr={12} $fill="#3fdfa0" $used={8}>5% (5%)</Meter>
              <BarLabel $up={5}>磁盘容量</BarLabel>
              <Meter $w={186} $fill="#40bfff" $used={110}>61%</Meter>
            </StatusRow>
          </RightColumn>
        </Main>
      </Body>

      <Grip width="11" height="11" viewBox="0 0 11 11">
        <path d="M8 1h2v2H8zM5 4h2v2H5zM8 4h2v2H8zM2 7h2v2H2zM5 7h2v2H5zM8 7h2v2H8z" fill="#9a9a9a" />
      </Grip>

      <Annotation width="1375" height="843" viewBox="0 0 1375 843">
        <rect x="1188.500" y="55.500" width="54" height="67" fill="none" stroke="#ff3b3b" strokeWidth="7" />
        <polygon points="1033,220 1034,221 1157,145 1160,148 1170,132 1151,135 1154,139" fill="#ff3b3b" />
      </Annotation>
    </Window>
  );
};

export default App;
